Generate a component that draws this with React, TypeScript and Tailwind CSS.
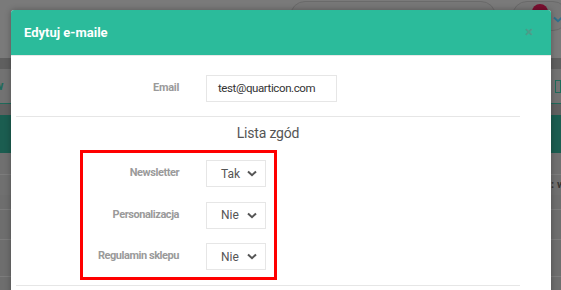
const font = { fontFamily: 'Roboto, "Noto Sans", sans-serif' }

const CONSENTS = [
  { label: 'Newsletter', value: 'Tak' },
  { label: 'Personalizacja', value: 'Nie' },
  { label: 'Regulamin sklepu', value: 'Nie' },
]

function Chevron({ color = '#555' }: { color?: string }) {
  return (
    <svg width="10" height="7" viewBox="0 0 10 7" className="shrink-0">
      <path d="M1 1.5 L5 5.2 L9 1.5" fill="none" stroke={color} strokeWidth="2" />
    </svg>
  )
}

export default function App() {
  return (
    <div className="relative w-[561px] h-[290px] overflow-hidden bg-[#747474]" style={font}>
      {/* Page behind the overlay */}
      <div className="flex flex-col">
        <div className="h-[58px] bg-[#7a7a7a] flex items-start pl-[290px] pt-[1px]">
          <div className="w-[206px] h-[30px] rounded-full border border-[#6a6a6a] bg-[#777] shrink-0" />
          <div className="relative ml-[16px] w-[56px] h-[30px] rounded-full border border-[#6a6a6a] bg-[#777] shrink-0">
            <div className="absolute left-[19px] top-[2px] w-[16px] h-[16px] rounded-full bg-[#7a1030]" />
            <div className="absolute left-[40px] top-[14px]">
              <Chevron color="#2f6f8c" />
            </div>
          </div>
        </div>
        <div className="h-[11px] bg-[#5f5f5f]" />
        <div className="h-[35px] bg-[#727272] border-b border-[#1f6a5a] flex items-center justify-between">
          <span className="text-[13px] font-bold text-[#1f6a5a] -ml-[6px]">w</span>
          <span className="w-[6px] h-[13px] border border-[#1f6a5a]" />
        </div>
        <div className="h-[11px] bg-[#606060]" />
        <div className="h-[38px] bg-[#1b5d50]" />
        <div className="h-[22px] bg-[#707070] border-b border-[#7c7c7c]" />
        <div className="h-[20px] bg-[#707070] flex items-center justify-end">
          <span className="text-[11px] font-bold text-[#333] -mr-[4px]">: w</span>
        </div>
        <div className="h-[15px] bg-[#6e6e6e] border-b border-[#7c7c7c]" />
        <div className="h-[30px] bg-[#6e6e6e] border-b border-[#7c7c7c]" />
        <div className="h-[37px] bg-[#6e6e6e] border-b border-[#7c7c7c]" />
        <div className="h-[20px] bg-[#6e6e6e]" />
      </div>

      {/* Modal */}
      <div className="absolute left-[11px] top-[10px] w-[540px] bg-white shadow-[0_0_6px_rgba(0,0,0,0.3)] rounded-t-[3px]">
        <div className="h-[46px] bg-[#2bbb9b] flex items-center justify-between pl-[13px] pr-[18px] border-b border-[#e8e8e8] rounded-t-[3px]">
          <h2 className="text-[13px] font-bold text-white">Edytuj e-maile</h2>
          <span className="text-[15px] font-bold text-[#4d9c89] leading-none">×</span>
        </div>

        <div className="pl-[5px] pr-[31px] pt-[19px] pb-[20px]">
          {/* Email */}
          <div className="flex items-center">
            <label className="w-[163px] text-right text-[11px] font-bold text-[#9a9a9a] tracking-[-0.3px]">Email</label>
            <div className="ml-[27px] w-[131px] h-[27px] border border-[#e6e6e6] flex items-center pl-[11px] text-[11.5px] text-[#333] tracking-[-0.4px]">
              test@quarticon.com
            </div>
          </div>

          <div className="mt-[14px] border-t border-[#e6e6e6]" />

          <div className="h-[33px] flex items-center justify-center text-[14px] text-[#555] tracking-[-0.2px]">Lista zgód</div>

          {/* Consents */}
          <div className="ml-[64px] w-[197px] border-[3px] border-[#ff0000] pt-[7px] pb-[7px] flex flex-col gap-[14.5px]">
            {CONSENTS.map(c => (
              <div key={c.label} className="flex items-center h-[27px]">
                <label className="w-[96px] text-right text-[11px] font-bold text-[#9a9a9a] whitespace-nowrap tracking-[-0.45px]">{c.label}</label>
                <div className="ml-[27px] w-[60px] h-[27px] border border-[#e6e6e6] flex items-center justify-between pl-[14px] pr-[8px] text-[12px] text-[#555]">
                  {c.value}
                  <Chevron />
                </div>
              </div>
            ))}
          </div>

          <div className="mt-[5px] border-t border-[#e6e6e6]" />
        </div>
      </div>
    </div>
  )
}
